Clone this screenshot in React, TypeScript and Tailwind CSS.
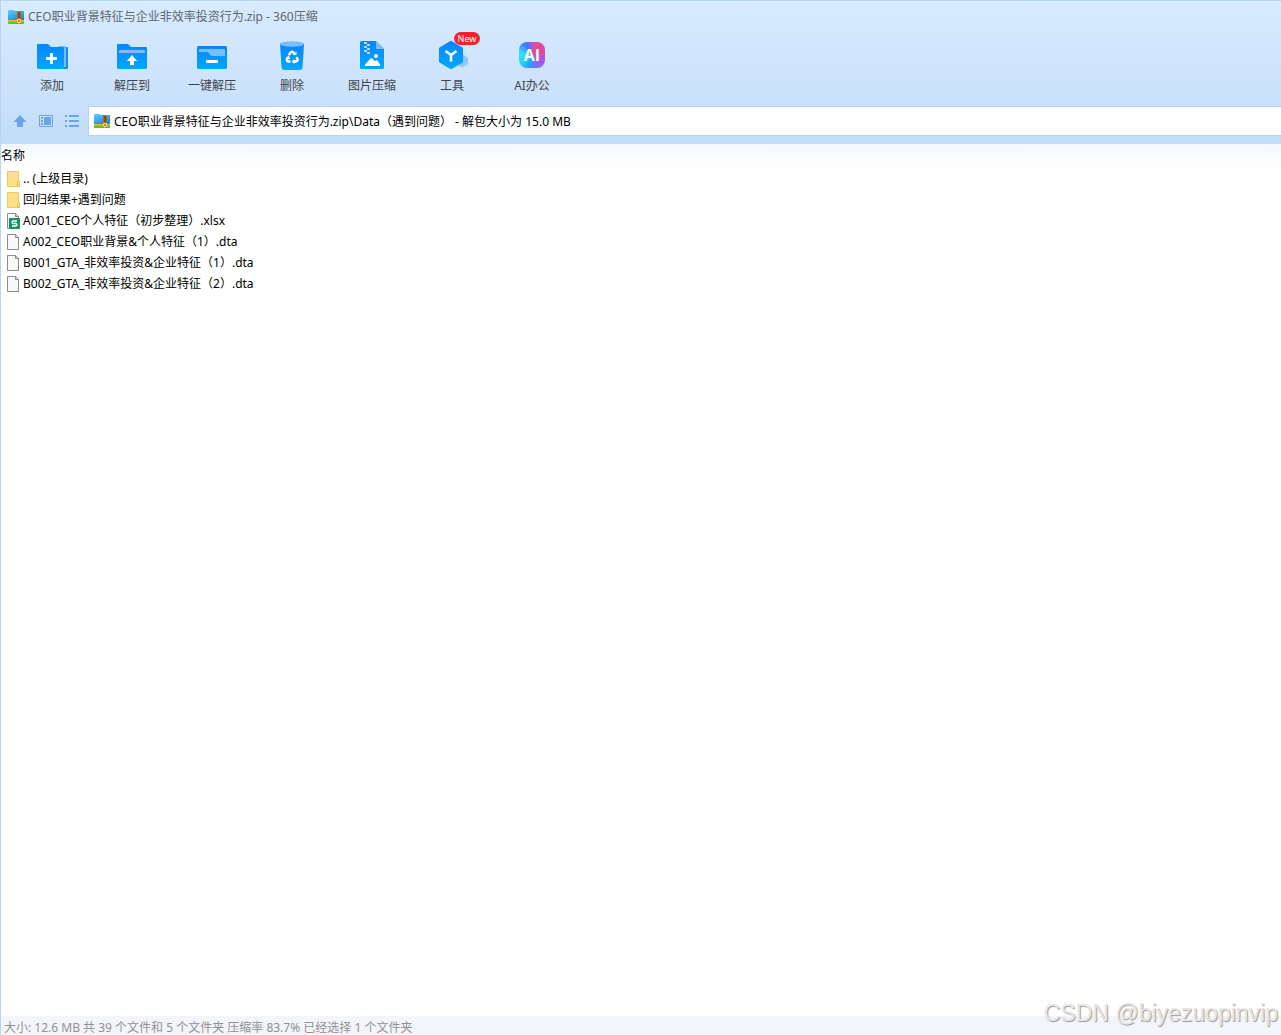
import React, { useState } from "react";

type FileKind = "folder" | "sheet" | "file";

interface Entry {
  name: string;
  kind: FileKind;
}

const entries: Entry[] = [
  { name: ".. (上级目录)", kind: "folder" },
  { name: "回归结果+遇到问题", kind: "folder" },
  { name: "A001_CEO个人特征（初步整理）.xlsx", kind: "sheet" },
  { name: "A002_CEO职业背景&个人特征（1）.dta", kind: "file" },
  { name: "B001_GTA_非效率投资&企业特征（1）.dta", kind: "file" },
  { name: "B002_GTA_非效率投资&企业特征（2）.dta", kind: "file" },
];

function BlueGradient({ id }: { id: string }) {
  return (
    <defs>
      <linearGradient id={id} x1="0" y1="0" x2="0" y2="1">
        <stop offset="0" stopColor="#0a84ff" />
        <stop offset="1" stopColor="#00a8ff" />
      </linearGradient>
    </defs>
  );
}

function ArchiveIcon() {
  return (
    <svg className="h-4 w-4 shrink-0" viewBox="0 0 16 16" aria-hidden="true">
      <defs>
        <linearGradient id="archive" x1="0" y1="0" x2="0.6" y2="1">
          <stop offset="0" stopColor="#5fd0fb" />
          <stop offset="1" stopColor="#1a86dc" />
        </linearGradient>
      </defs>
      <path d="M0 2q0-1 1-1h4.500l1 1H15q1 0 1 1v9H0z" fill="url(#archive)" />
      <path d="M0 11h16v2H0z" fill="#f5b62e" />
      <path d="M0 12.500h16V14q0 1-1 1H1q-1 0-1-1z" fill="#5cc233" />
      <path d="M9 2.500h4V15H9z" fill="#b5651d" />
      <path d="M10 3h1v1h-1zM11 4h1v1h-1zM10 5h1v1h-1zM11 6h1v1h-1zM10 7h1v1h-1zM11 8h1v1h-1z" fill="#5b3210" />
      <path d="M9 10h4v3l-1 1.500h-2L9 13z" fill="#ffd56b" />
      <path d="M10.500 11h1v2h-1z" fill="#70400f" />
    </svg>
  );
}

function AddIcon() {
  return (
    <svg className="h-8 w-8 overflow-visible" viewBox="0 0 32 32" aria-hidden="true">
      <BlueGradient id="add" />
      <path d="M28 7h3q1 0 1 1v20q0 1-1 1h-3z" fill="#0a91ff" />
      <path d="M22 6h7q1 0 1 1v20h-3z" fill="#79bfff" />
      <path d="M1 5q0-1 1-1h9q1 0 1.500.5L15 7h12q1 0 1 1v20q0 1-1 1H2q-1 0-1-1z" fill="url(#add)" />
      <path d="M10 17h4v-4h3v4h4v3h-4v4h-3v-4h-4z" fill="#fff" />
    </svg>
  );
}

function ExtractIcon() {
  return (
    <svg className="h-8 w-8 overflow-visible" viewBox="0 0 32 32" aria-hidden="true">
      <BlueGradient id="extract" />
      <path d="M1 5q0-1 1-1h9q1 0 1.500.5L15 7h15q1 0 1 1v20q0 1-1 1H2q-1 0-1-1z" fill="url(#extract)" />
      <path d="M3 13v-2q0-1 1-1h24q1 0 1 1v2z" fill="#79bfff" />
      <path d="M16 15l5 6h-3v4h-4v-4h-3z" fill="#fff" />
    </svg>
  );
}

function QuickExtractIcon() {
  return (
    <svg className="h-8 w-8 overflow-visible" viewBox="0 0 32 32" aria-hidden="true">
      <BlueGradient id="quick" />
      <rect x="1" y="6" width="30" height="23" rx="1.500" fill="url(#quick)" />
      <path d="M3 12v-2q0-1 1-1h24q1 0 1 1v6H16l-1.500-.8L12.500 12.800Q12 12 11 12z" fill="#79bfff" />
      <rect x="10" y="20" width="12" height="3" rx="1" fill="#fff" />
    </svg>
  );
}

function DeleteIcon() {
  return (
    <svg className="h-8 w-8 overflow-visible" viewBox="0 0 32 32" aria-hidden="true">
      <BlueGradient id="delete" />
      <path d="M4 3.500h24l-1.500 24q-.2 2.500-3.500 2.500H9q-3.300 0-3.500-2.500z" fill="url(#delete)" />
      <ellipse cx="16" cy="4" rx="12" ry="2.800" fill="#79bfff" />
      <g fill="none" stroke="#fff" strokeWidth="2.400">
        <path d="M12.800 15.200l1.700-2.700q1.500-1.500 3 0l1 1.700" />
        <path d="M20.500 17l1 2q.5 2.300-1.800 2.500h-2.200" />
        <path d="M14.500 21.500h-2q-2.300-.4-1.500-2.500l1-1.700" />
      </g>
      <path d="M16.500 15h4v-3.500zM18.500 19l-3 2.500 3 2.500zM9.500 18l3.500-2.500 1.200 4z" fill="#fff" />
    </svg>
  );
}

function ImageIcon() {
  return (
    <svg className="h-8 w-8 overflow-visible" viewBox="0 0 32 32" aria-hidden="true">
      <BlueGradient id="image" />
      <path d="M4 2.500Q4 1 5.500 1H20l8 8v18.500q0 1.500-1.500 1.500h-21Q4 29 4 27.500z" fill="url(#image)" />
      <path d="M20 1l8 8h-7q-1 0-1-1z" fill="#79bfff" />
      <path d="M8 2h3v2H8zM11 4h3v2h-3zM8 6h3v2H8zM11 8h3v2h-3zM8 10h3v2H8zM11 12h3v2h-3z" fill="#b5dcff" />
      <path d="M9 26v-1.500l5.500-6q1-.8 2 0l2.500 2.700 1-.8q.7-.4 1.400.2L24 24.500V26z" fill="#fff" />
      <circle cx="20" cy="16" r="2" fill="#fff" />
    </svg>
  );
}

function ToolsIcon() {
  return (
    <svg className="h-8 w-8 overflow-visible" viewBox="0 0 32 32" aria-hidden="true">
      <BlueGradient id="tools" />
      <path d="M26 14l6 3.500V24l-6 3.500-6-3.500v-6.500z" fill="#8dc8fd" />
      <path d="M15 1q.5 0 1 .3L26.500 7.500q.5.300.5 1v13q0 .7-.5 1L16 28.700q-1 .5-2 0L3.500 22.500q-.5-.3-.5-1v-13q0-.7.5-1L14 1.300Q14.500 1 15 1z" fill="url(#tools)" />
      <path d="M9.500 11l5.500 4 5.500-4M15 15v6.500" fill="none" stroke="#fff" strokeWidth="2.600" />
    </svg>
  );
}

function AiIcon() {
  return (
    <span className="flex h-8 w-8 items-start justify-center pt-0.5">
      <span className="flex h-[26px] w-[26px] items-center justify-center rounded-lg bg-[conic-gradient(from_20deg,#f0468f,#e0489f_14%,#a458ee_28%,#7c6cff_38%,#22a8fb_50%,#27d3f5_58%,#39e0f2_72%,#3a7bff_86%,#9a5cf0_94%,#f0468f)] font-['Open_Sans',sans-serif] text-base leading-none font-bold text-white">
        AI
      </span>
    </span>
  );
}

const tools = [
  { label: "添加", icon: AddIcon },
  { label: "解压到", icon: ExtractIcon },
  { label: "一键解压", icon: QuickExtractIcon },
  { label: "删除", icon: DeleteIcon },
  { label: "图片压缩", icon: ImageIcon },
  { label: "工具", icon: ToolsIcon, badge: "New" },
  { label: "AI办公", icon: AiIcon },
];

function EntryIcon({ kind }: { kind: FileKind }) {
  if (kind === "folder") {
    return (
      <svg className="h-4 w-4 shrink-0" viewBox="0 0 16 16" aria-hidden="true">
        <path d="M1.500.5h11v10h1v5h-12z" fill="#ffe08a" stroke="#eccb64" />
        <path d="M11.500 15.500v-4l1-1h1v5z" fill="#ffe9a8" stroke="#e5bd4b" />
      </svg>
    );
  }
  return (
    <svg className="h-4 w-4 shrink-0" viewBox="0 0 16 16" aria-hidden="true">
      <path d="M1.500.5h8l3 3v12h-11z" fill={kind === "sheet" ? "#fff" : "#f8f8f8"} stroke="#8c8c8c" />
      <path d="M9.500.5v3h3" fill="none" stroke="#8c8c8c" />
      {kind === "sheet" && (
        <>
          <rect x="3" y="5" width="11" height="11" rx="1" fill="#149463" />
          <path d="M11 8H7.500q-1.500 0-1.500 1.200t1.500 1.300h2q1.500.1 1.500 1.300T9.500 13H6" fill="none" stroke="#fff" strokeWidth="1.300" />
        </>
      )}
    </svg>
  );
}

export default function App() {
  const [selected, setSelected] = useState<string | null>(null);

  return (
    <div className="relative flex min-h-screen flex-col border-l border-[#b9d3f3] bg-white font-['Noto_Sans','Noto_Sans_CJK_SC',sans-serif] text-xs leading-4 text-black">
      <header className="border-t border-[#b9d5f1] bg-linear-to-b from-[#d8ebff] to-[#c3ddf8]">
        <div className="flex h-8 items-center gap-1 px-[7px] text-[#5f6672]">
          <ArchiveIcon />
          <h1>CEO职业背景特征与企业非效率投资行为.zip - 360压缩</h1>
        </div>

        <nav className="flex px-[11px] pb-3">
          {tools.map((tool) => (
            <button
              key={tool.label}
              type="button"
              className="relative flex w-20 flex-col items-center gap-1.5 pt-[7px] text-[#3f444c] hover:text-black"
            >
              <tool.icon />
              <span>{tool.label}</span>
              {tool.badge && (
                <span className="absolute -top-px left-[42px] flex h-[13px] w-[26px] items-center justify-center rounded-full bg-[#f5222d] text-[9px] leading-none text-white">
                  {tool.badge}
                </span>
              )}
            </button>
          ))}
        </nav>

        <div className="flex items-center pb-2">
          <div className="flex w-[87px] shrink-0 items-center gap-2.5 pl-[11px] text-[#6ba3ec]">
            <button type="button" aria-label="向上">
              <svg className="h-4 w-4" viewBox="0 0 16 16" fill="currentColor">
                <path d="M8 2l6.500 7H11v5H5V9H1.500z" />
              </svg>
            </button>
            <button type="button" aria-label="预览">
              <svg className="h-4 w-4" viewBox="0 0 16 16" fill="currentColor">
                <path d="M1.500 2.500h13v11h-13z" fill="none" stroke="currentColor" />
                <path d="M3 4h2v2H3zM3 7h2v2H3zM3 10h2v2H3zM6 4h7v8H6z" />
              </svg>
            </button>
            <button type="button" aria-label="列表">
              <svg className="h-4 w-4" viewBox="0 0 16 16" fill="currentColor">
                <path d="M1 2h2v2H1zM5 2h10v2H5zM1 7h2v2H1zM5 7h10v2H5zM1 12h2v2H1zM5 12h10v2H5z" />
              </svg>
            </button>
          </div>
          <div className="flex h-[30px] flex-1 items-center gap-1 border-y border-l border-[#b5d3f4] bg-white pl-[5px]">
            <ArchiveIcon />
            <input
              aria-label="路径"
              readOnly
              value="CEO职业背景特征与企业非效率投资行为.zip\Data（遇到问题） - 解包大小为 15.0 MB"
              className="min-w-0 flex-1 bg-transparent pt-0.5 outline-none"
            />
          </div>
        </div>
      </header>

      <main className="flex-1">
        <table className="w-full border-collapse">
          <thead>
            <tr className="h-6 bg-linear-to-b from-[#f2f8ff] to-white">
              <th scope="col" className="p-0 text-left font-normal">名称</th>
            </tr>
          </thead>
          <tbody>
            {entries.map((entry) => (
              <tr
                key={entry.name}
                onClick={() => setSelected(entry.name)}
                className={`h-[21px] ${selected === entry.name ? "bg-[#cce8ff]" : ""}`}
              >
                <td className="p-0 pl-[5px]">
                  <div className="flex items-center gap-px">
                    <EntryIcon kind={entry.kind} />
                    <span>{entry.name}</span>
                  </div>
                </td>
              </tr>
            ))}
          </tbody>
        </table>
      </main>

      <footer className="flex h-[19px] items-center bg-[#f3f5fa] px-[3px] pt-1 text-[#929292]">
        大小: 12.6 MB 共 39 个文件和 5 个文件夹 压缩率 83.7% 已经选择 1 个文件夹
      </footer>

      <div className="pointer-events-none absolute right-[3px] bottom-2 font-['Liberation_Sans',sans-serif] text-[23px] leading-7 text-[#e6e6e6] [text-shadow:1px_1px_1px_#999]">
        CSDN @biyezuopinvip
      </div>
    </div>
  );
}
